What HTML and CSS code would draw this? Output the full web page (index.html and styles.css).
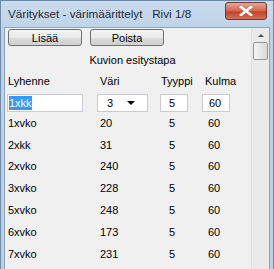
FILE: index.html
```html
<!DOCTYPE html>
<html lang="fi">
<head>
  <meta charset="UTF-8" />
  <title>Väritykset</title>
  <link rel="stylesheet" href="styles.css">
</head>
<body>
  <div class="window">
    <div class="titlebar">
      <span class="title">Väritykset - värimäärittelyt&nbsp;&nbsp; Rivi 1/8</span>
      <button class="close">
        <svg width="14" height="10" viewBox="0 0 14 10">
          <path d="M2 1 L12 9 M12 1 L2 9" stroke="#fff" stroke-width="2.6" stroke-linecap="square"/>
        </svg>
      </button>
    </div>
    <div class="client">
      <div class="content">
        <div class="toolbar">
          <button class="btn">Lisää</button>
          <button class="btn">Poista</button>
        </div>
        <div class="section">Kuvion esitystapa</div>
        <div class="grid head">
          <span>Lyhenne</span>
          <span>Väri</span>
          <span>Tyyppi</span>
          <span>Kulma</span>
        </div>
        <div class="grid edit">
          <div class="field name"><span class="sel">1xkk</span></div>
          <div class="field combo"><span>3</span><span class="arrow"></span></div>
          <div class="field num">5</div>
          <div class="field num">60</div>
        </div>
        <div class="grid row"><span>1xvko</span><span class="c">20</span><span class="c">5</span><span class="c">60</span></div>
        <div class="grid row"><span>2xkk</span><span class="c">31</span><span class="c">5</span><span class="c">60</span></div>
        <div class="grid row"><span>2xvko</span><span class="c">240</span><span class="c">5</span><span class="c">60</span></div>
        <div class="grid row"><span>3xvko</span><span class="c">228</span><span class="c">5</span><span class="c">60</span></div>
        <div class="grid row"><span>5xvko</span><span class="c">248</span><span class="c">5</span><span class="c">60</span></div>
        <div class="grid row"><span>6xvko</span><span class="c">173</span><span class="c">5</span><span class="c">60</span></div>
        <div class="grid row"><span>7xvko</span><span class="c">231</span><span class="c">5</span><span class="c">60</span></div>
      </div>
      <div class="scrollbar">
        <div class="up"></div>
        <div class="thumb"></div>
      </div>
    </div>
  </div>
</body>
</html>
```

FILE: styles.css
```css
body {
  margin: 0;
  font-family: "Liberation Sans", Arial, sans-serif;
  font-size: 11px;
  color: #000;
  background: #c4d7eb;
  overflow: hidden;
}
.window {
  width: 274px;
  height: 269px;
  display: flex;
  flex-direction: column;
  background: linear-gradient(#c9dbee, #bed2e7 30px, #bcd1e6);
  box-sizing: border-box;
  border-left: 1px solid #6f8aa6;
  border-right: 1px solid #6f8aa6;
  border-top: 1px solid #6f8aa6;
}
.titlebar {
  height: 26px;
  display: flex;
  align-items: center;
  justify-content: space-between;
  padding: 0 6px 0 7px;
}
.title {
  font-size: 11.7px;
  color: #1e2a38;
  margin-top: -2px;
}
.close {
  width: 42px;
  height: 18px;
  margin-top: -6px;
  border: 1px solid #6d3a33;
  border-radius: 3px;
  background: linear-gradient(#e8a594, #d4644e 50%, #c3422b 55%, #d66f55);
  display: flex;
  align-items: center;
  justify-content: center;
  padding: 0;
}
.client {
  flex: 1;
  display: flex;
  margin: 0 3px 0 3px;
  border-top: 1px solid #8da2b8;
  border-left: 1px solid #8da2b8;
  border-right: 1px solid #8da2b8;
  background: #f0f0f0;
}
.content {
  flex: 1;
  padding: 1px 0 0 3px;
}
.toolbar {
  display: flex;
  gap: 8px;
}
.btn {
  width: 74px;
  height: 17px;
  padding: 0;
  font-family: inherit;
  font-size: 11px;
  border: 1px solid #707070;
  border-radius: 3px;
  background: linear-gradient(#f2f2f2, #ebebeb 50%, #dddddd 51%, #cfcfcf);
}
.section {
  text-align: center;
  padding: 6px 0 0 6px;
  height: 22px;
  box-sizing: border-box;
  line-height: 16px;
}
.grid {
  display: grid;
  grid-template-columns: 92px 60px 42px 40px;
  align-items: center;
}
.head {
  height: 26px;
}
.head span:nth-child(3) { padding-left: 1px; }
.head span:nth-child(4) { padding-left: 3px; }
.edit {
  height: 18px;
  align-items: start;
}
.field {
  height: 18px;
  box-sizing: border-box;
  background: #fff;
  border: 1px solid #c8ccd2;
  display: flex;
  align-items: center;
}
.field.name {
  width: 76px;
  margin-left: -1px;
  padding-left: 1px;
}
.sel {
  background: #3399ff;
  color: #fff;
  padding: 1px 0;
}
.field.combo {
  width: 51px;
  margin-left: -3px;
  padding: 0 12px 0 9px;
  justify-content: space-between;
}
.arrow {
  width: 0;
  height: 0;
  border-left: 4px solid transparent;
  border-right: 4px solid transparent;
  border-top: 4px solid #000;
}
.field.num {
  width: 28px;
  padding-left: 8px;
}
.grid .field.num:last-child {
  padding-left: 6px;
}
.row {
  height: 21.8px;
}
.row .c:nth-child(3) {
  padding-left: 9px;
}
.row .c:nth-child(4) {
  padding-left: 6px;
}
.scrollbar {
  width: 17px;
  background: #eaeaea;
  border-left: 1px solid #e0e0e0;
  display: flex;
  flex-direction: column;
  align-items: center;
}
.up {
  margin-top: 6px;
  width: 0;
  height: 0;
  border-left: 3px solid transparent;
  border-right: 3px solid transparent;
  border-bottom: 3px solid #4d4d4d;
}
.thumb {
  margin-top: 5px;
  width: 15px;
  height: 18px;
  box-sizing: border-box;
  border: 1px solid #979797;
  border-radius: 2px;
  background: linear-gradient(90deg, #f3f3f3, #e6e6e6 50%, #d9d9d9);
}
```
